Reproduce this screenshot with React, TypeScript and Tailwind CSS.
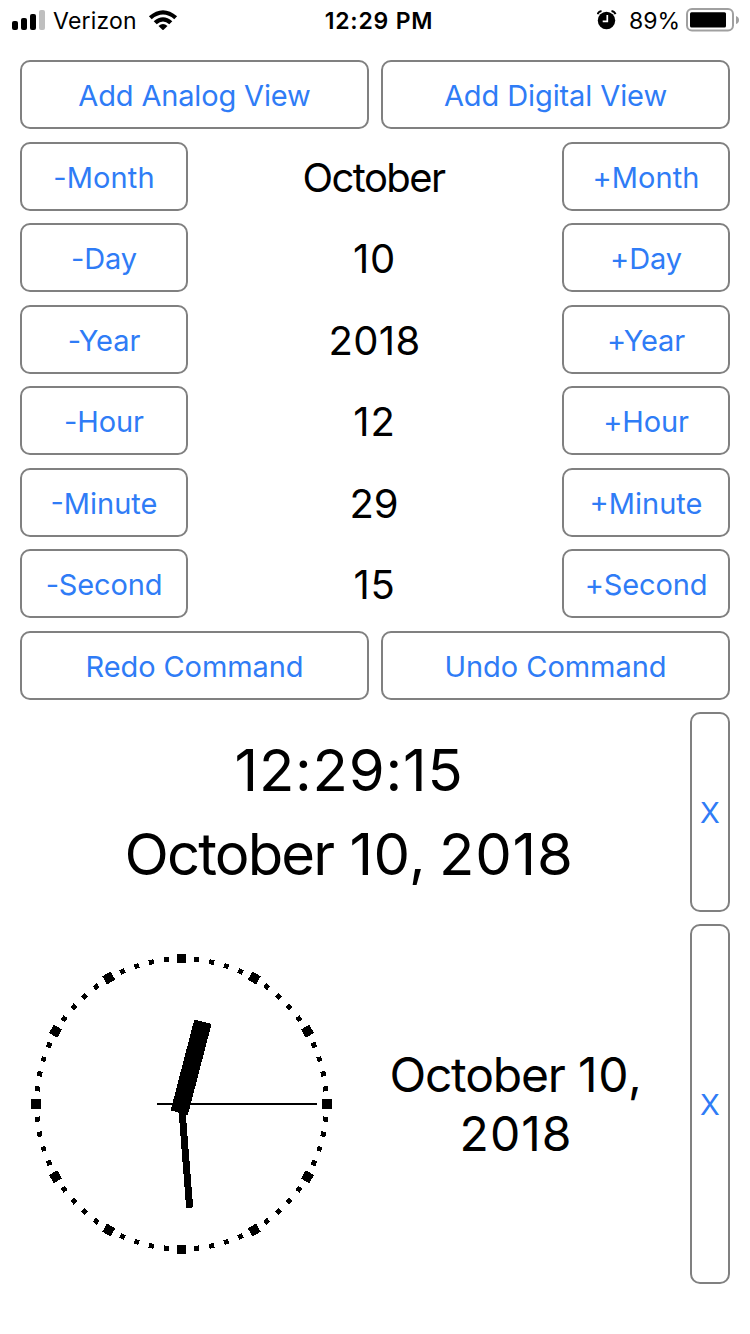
import React from "react";

const BLUE_BUTTON =
  "flex items-center justify-center rounded-[10px] border-2 border-[#808080] bg-white text-[29px] leading-none text-[#2f7cf6] whitespace-nowrap";

function Button({ label, size, spacing }: { label: string; size: string; spacing: string }) {
  return (
    <button className={`${BLUE_BUTTON} ${size}`}>
      <span className={spacing}>{label}</span>
    </button>
  );
}

const FIELDS = [
  { name: "Month", value: "October", side: "tracking-[0.1px]", mid: "pr-[3px] tracking-[-1.6px]" },
  { name: "Day", value: "10", side: "tracking-[-0.1px]", mid: "pr-[1px] tracking-[0.8px]" },
  { name: "Year", value: "2018", side: "tracking-[-0.1px]", mid: "pr-[1px] tracking-[0.4px]" },
  { name: "Hour", value: "12", side: "tracking-[-0.1px]", mid: "pr-[1px] tracking-[0.8px]" },
  { name: "Minute", value: "29", side: "tracking-[0px]", mid: "pr-[2px] tracking-[-0.2px]" },
  { name: "Second", value: "15", side: "tracking-[-0.15px]", mid: "pr-[1px] tracking-[0.8px]" },
];

function StatusBar() {
  return (
    <header className="grid h-[40px] grid-cols-[1fr_auto_1fr] items-center pl-3 pr-[10px] text-[23px] leading-none text-black">
      <div className="flex items-center">
        <svg width="33" height="20" viewBox="0 0 33 20">
          <rect x="0" y="11" width="6" height="9" rx="2" />
          <rect x="9" y="8" width="6" height="12" rx="2" />
          <rect x="18" y="4" width="6" height="16" rx="2" />
          <rect x="27" y="0" width="6" height="20" rx="2" fill="#bfbfbf" />
        </svg>
        <span className="ml-2 pt-[2px] tracking-[0.2px]">Verizon</span>
        <svg className="ml-[11px]" width="30" height="20" viewBox="0 0 30 20">
          <path d="M0.9 6.2Q15-5.8 29.1 6.2L26.3 9.2Q15 0 3.7 9.2Z" />
          <path d="M5.7 11.2Q15 3.4 24.3 11.2L21.3 14.2Q15 9 8.7 14.2Z" />
          <path d="M10.5 16Q15 12.2 19.5 16L15 20.3Z" />
        </svg>
      </div>
      <span className="pl-[6px] pt-[2px] font-semibold tracking-[0.8px]">12:29 PM</span>
      <div className="flex items-center justify-end">
        <svg width="20" height="20" viewBox="0 0 20 20">
          <circle cx="9.5" cy="10.5" r="8.7" />
          <path d="M0.5 4.2Q1.5 1.5 4.5 1M14.5 1Q17.5 1.5 18.5 4.2" fill="none" stroke="black" strokeWidth="2" />
          <path d="M10.3 5V11.3H5.7" fill="none" stroke="white" strokeWidth="1.7" />
        </svg>
        <span className="ml-[12px] pt-[2px]">89%</span>
        <svg className="ml-[6px]" width="54" height="24" viewBox="0 0 54 24">
          <rect x="1" y="1" width="46" height="21.5" rx="5" fill="white" stroke="#a0a0a0" strokeWidth="2" />
          <rect x="4" y="4.2" width="36" height="15.3" rx="1.5" />
          <path d="M50 8Q53 9 53 12Q53 15 50 16Z" fill="#a0a0a0" />
        </svg>
      </div>
    </header>
  );
}

function AnalogClock() {
  const ticks = Array.from({ length: 60 }, (_, i) => i);
  return (
    <svg width="322" height="360" viewBox="20 924 322 360" shapeRendering="crispEdges">
      <g transform="translate(181.5 1104)">
        {ticks.map((i) =>
          i % 5 === 0 ? (
            <rect key={i} x="-4.75" y="-150.25" width="9.5" height="9.5" transform={`rotate(${i * 6})`} />
          ) : (
            <rect key={i} x="-2.5" y="-147.5" width="5" height="5" transform={`rotate(${i * 6})`} />
          ),
        )}
        <rect x="-8.9" y="-85" width="17.8" height="94" transform="rotate(14.6)" />
        <rect x="-3.5" y="-104" width="7" height="104" transform="rotate(175.5)" />
        <rect x="-24.5" y="-1" width="160" height="2" />
      </g>
    </svg>
  );
}

export default function App() {
  return (
    <div className="h-[1334px] w-[750px] overflow-hidden bg-white font-['Inter','Liberation_Sans',sans-serif] text-black">
      <StatusBar />
      <main className="flex flex-col gap-[12.5px] px-5 pt-5">
        <div className="grid grid-cols-2 gap-3">
          <Button label="Add Analog View" size="h-[69px] pt-[2px]" spacing="tracking-[-0.15px]" />
          <Button label="Add Digital View" size="h-[69px] pt-[2px]" spacing="tracking-[-0.1px]" />
        </div>
        {FIELDS.map((f) => (
          <div key={f.name} className="flex items-center justify-between">
            <Button label={`-${f.name}`} size="h-[69px] w-[168px] pt-[2px]" spacing={f.side} />
            <span className={`pt-[3px] text-[40px] leading-none ${f.mid}`}>{f.value}</span>
            <Button label={`+${f.name}`} size="h-[69px] w-[168px] pt-[2px]" spacing={f.side} />
          </div>
        ))}
        <div className="grid grid-cols-2 gap-3">
          <Button label="Redo Command" size="h-[69px] pt-[2px]" spacing="tracking-[-0.1px]" />
          <Button label="Undo Command" size="h-[69px] pt-[2px]" spacing="tracking-[-0.05px]" />
        </div>
        <section className="flex h-[200px] gap-3">
          <div className="flex flex-1 flex-col items-center justify-center text-[58px] leading-[84px]">
            <span className="tracking-[0.8px]">12:29:15</span>
            <span className="whitespace-pre">
              <span className="tracking-[-1.85px]">October</span>
              <span className="tracking-[0px]"> </span>
              <span className="tracking-[0.3px]">10,</span>
              <span className="tracking-[-3.3px]"> </span>
              <span className="tracking-[0.8px]">2018</span>
            </span>
          </div>
          <Button label="X" size="h-[200px] w-[40px]" spacing="tracking-normal" />
        </section>
        <section className="-mt-[0.5px] flex h-[360px]">
          <AnalogClock />
          <div className="flex w-[348px] flex-col items-center justify-center text-[48px] leading-[59px]">
            <span className="whitespace-pre">
              <span className="tracking-[-1.2px]">October</span>
              <span className="tracking-[0px]"> </span>
              <span className="tracking-[0.7px]">10,</span>
            </span>
            <span className="tracking-[1px]">2018</span>
          </div>
          <Button label="X" size="h-[360px] w-[40px]" spacing="tracking-normal" />
        </section>
      </main>
    </div>
  );
}
